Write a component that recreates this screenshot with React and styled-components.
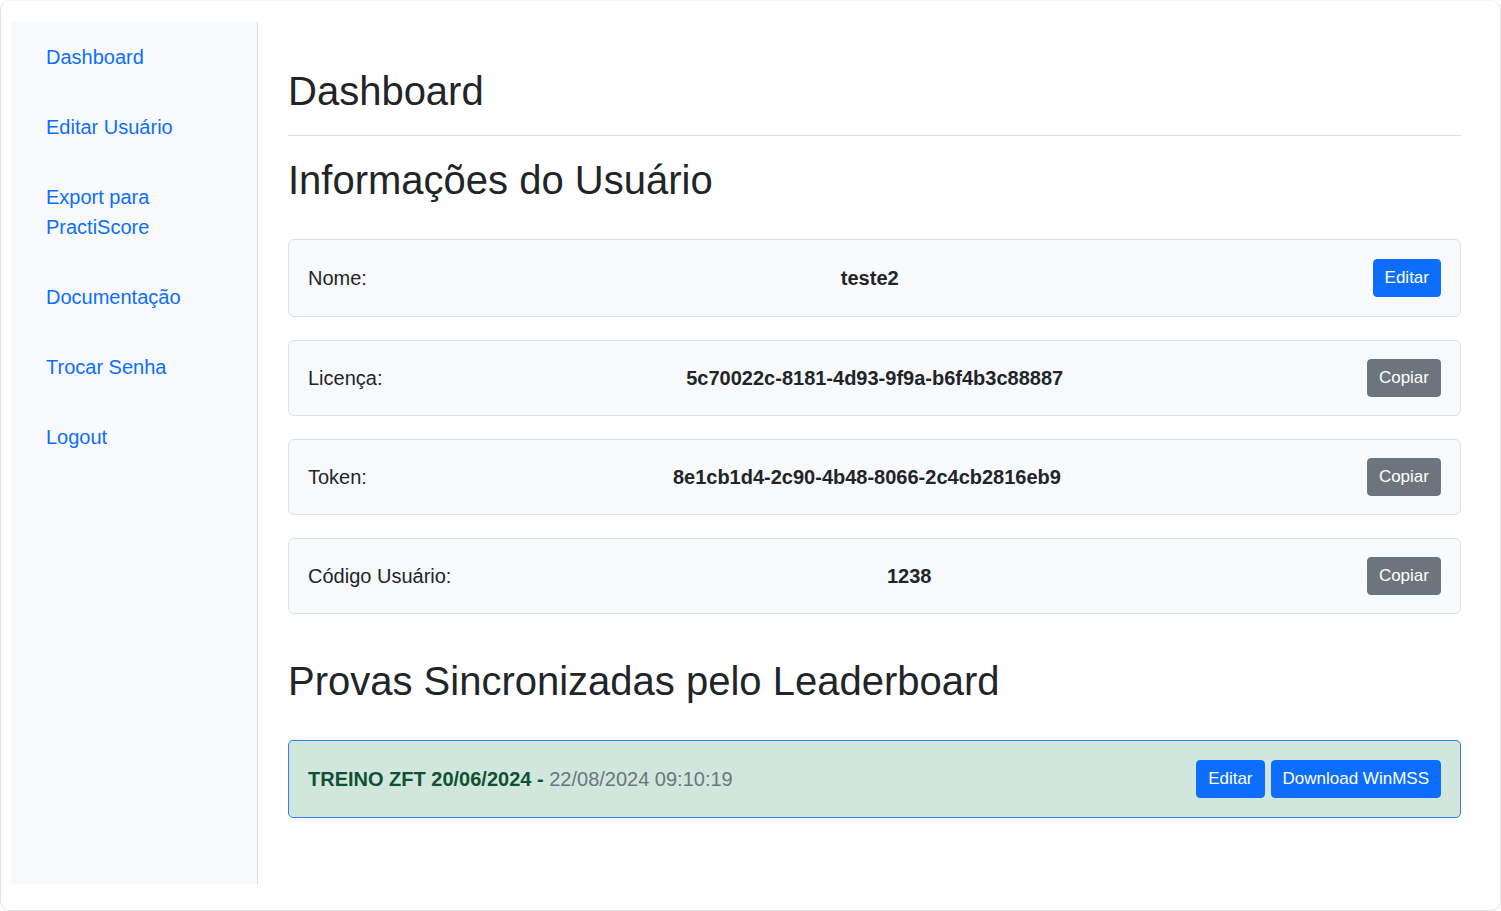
import React from 'react';
import styled, { createGlobalStyle } from 'styled-components';

const GlobalStyle = createGlobalStyle`
    html, body {
        margin: 0;
        padding: 0;
        background: #ffffff;
    }

    body {
        font-family: "Liberation Sans", Arial, sans-serif;
        color: #212529;
    }

    * {
        box-sizing: border-box;
    }
`;

const menu = ['Dashboard', 'Editar Usuário', 'Export para PractiScore', 'Documentação', 'Trocar Senha', 'Logout'];

const userInfo = [
    { label: 'Nome:', value: 'teste2', action: 'Editar', primary: true },
    { label: 'Licença:', value: '5c70022c-8181-4d93-9f9a-b6f4b3c88887', action: 'Copiar' },
    { label: 'Token:', value: '8e1cb1d4-2c90-4b48-8066-2c4cb2816eb9', action: 'Copiar' },
    { label: 'Código Usuário:', value: '1238', action: 'Copiar' }
];

export default function App() {
    return (
        <>
            <GlobalStyle />
            <Frame>
                <Sidebar>
                    {menu.map(item => (
                        <NavLink key={item} href="#">
                            {item}
                        </NavLink>
                    ))}
                </Sidebar>

                <Main>
                    <PageTitle>Dashboard</PageTitle>
                    <Divider />

                    <SectionTitle>Informações do Usuário</SectionTitle>
                    {userInfo.map(({ label, value, action, primary }) => (
                        <InfoCard key={label} tall={primary}>
                            <Label>{label}</Label>
                            <Value>{value}</Value>
                            <Button variant={primary ? 'primary' : 'secondary'}>{action}</Button>
                        </InfoCard>
                    ))}

                    <SectionTitle spaced>Provas Sincronizadas pelo Leaderboard</SectionTitle>
                    <SyncCard>
                        <SyncText>
                            <SyncName>TREINO ZFT 20/06/2024 - </SyncName>
                            <SyncDate>22/08/2024 09:10:19</SyncDate>
                        </SyncText>
                        <ButtonGroup>
                            <Button variant="primary">Editar</Button>
                            <Button variant="primary">Download WinMSS</Button>
                        </ButtonGroup>
                    </SyncCard>
                </Main>
            </Frame>
        </>
    );
}

const Frame = styled.div`
    height: 911px;
    display: flex;
    align-items: flex-start;
    padding: 21px 39px 0 10px;
    border: 1px solid #e2e2e2;
    border-top-color: #f4f4f4;
    border-radius: 10px;
    background: #ffffff;
`;

const Sidebar = styled.nav`
    flex: 0 0 247px;
    height: 862px;
    display: flex;
    flex-direction: column;
    padding: 0 35px;
    background: #f8f9fa;
    border-right: 1px solid #dcdcdc;
`;

const NavLink = styled.a`
    display: block;
    padding: 20px 0;
    font-size: 20px;
    line-height: 30px;
    color: #0d6efd;
    text-decoration: none;
`;

const Main = styled.main`
    flex: 1;
    padding: 45px 0 0 30px;
`;

const PageTitle = styled.h1`
    margin: 0;
    font-size: 40px;
    font-weight: 400;
    line-height: 48px;
    color: #212529;
`;

const Divider = styled.hr`
    margin: 20px 0 20px;
    border: 0;
    border-top: 1px solid #dfdfdf;
`;

const SectionTitle = styled.h2`
    margin: ${props => (props.spaced ? '43px' : '0')} 0 35px;
    font-size: 40px;
    font-weight: 400;
    line-height: 48px;
    color: #212529;
`;

const InfoCard = styled.div`
    display: flex;
    align-items: center;
    justify-content: space-between;
    padding: ${props => (props.tall ? '19px' : '18px')} 19px;
    margin-bottom: 23px;
    background: #f8f9fa;
    border: 1px solid #dee2e6;
    border-radius: 6px;

    &:last-of-type {
        margin-bottom: 0;
    }
`;

const Label = styled.span`
    font-size: 20px;
    line-height: 30px;
`;

const Value = styled.strong`
    font-size: 20px;
    line-height: 30px;
    font-weight: 700;
`;

const Button = styled.button`
    height: 38px;
    padding: 0 11px;
    font-family: inherit;
    font-size: 17px;
    line-height: 36px;
    color: #ffffff;
    background: ${props => (props.variant === 'primary' ? '#0d6efd' : '#6c757d')};
    border: 1px solid ${props => (props.variant === 'primary' ? '#0d6efd' : '#6c757d')};
    border-radius: 4px;
    cursor: pointer;
`;

const SyncCard = styled.div`
    display: flex;
    align-items: center;
    justify-content: space-between;
    padding: 19px 19px;
    background: #d1e7dd;
    border: 1px solid #2f7ef5;
    border-radius: 5px;
`;

const SyncText = styled.div`
    font-size: 20px;
    line-height: 30px;
`;

const SyncName = styled.strong`
    color: #0f5132;
    font-weight: 700;
`;

const SyncDate = styled.span`
    color: #6c757d;
`;

const ButtonGroup = styled.div`
    display: flex;
    gap: 6px;
`;
